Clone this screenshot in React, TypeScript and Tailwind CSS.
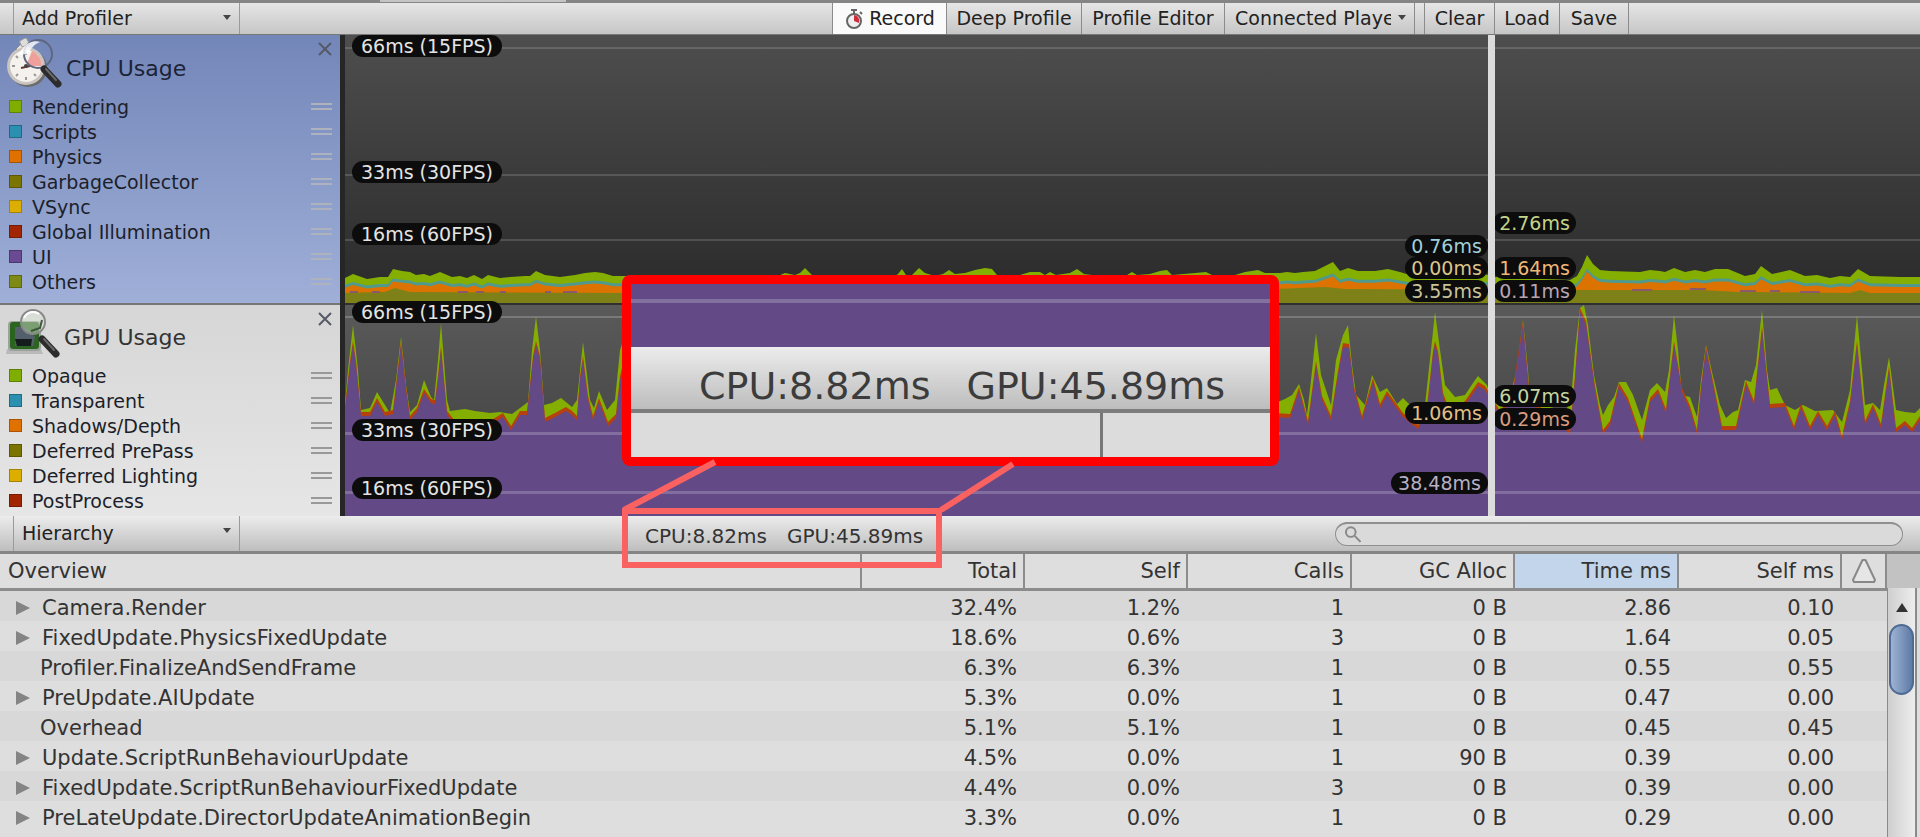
import React from "react";

type Series = { label: string; color: string };

const cpuSeries: Series[] = [
  { label: "Rendering", color: "bg-[#7fae00]" },
  { label: "Scripts", color: "bg-[#2b8fb0]" },
  { label: "Physics", color: "bg-[#e07000]" },
  { label: "GarbageCollector", color: "bg-[#7b7400]" },
  { label: "VSync", color: "bg-[#dcae00]" },
  { label: "Global Illumination", color: "bg-[#a02500]" },
  { label: "UI", color: "bg-[#6a4a92]" },
  { label: "Others", color: "bg-[#7f8a14]" },
];

const gpuSeries: Series[] = [
  { label: "Opaque", color: "bg-[#7fae00]" },
  { label: "Transparent", color: "bg-[#2b8fb0]" },
  { label: "Shadows/Depth", color: "bg-[#e07000]" },
  { label: "Deferred PrePass", color: "bg-[#7b7400]" },
  { label: "Deferred Lighting", color: "bg-[#dcae00]" },
  { label: "PostProcess", color: "bg-[#a02500]" },
];

type Row = { name: string; leaf?: boolean; cells: string[] };

const rows: Row[] = [
  { name: "Camera.Render", cells: ["32.4%", "1.2%", "1", "0 B", "2.86", "0.10"] },
  { name: "FixedUpdate.PhysicsFixedUpdate", cells: ["18.6%", "0.6%", "3", "0 B", "1.64", "0.05"] },
  { name: "Profiler.FinalizeAndSendFrame", leaf: true, cells: ["6.3%", "6.3%", "1", "0 B", "0.55", "0.55"] },
  { name: "PreUpdate.AIUpdate", cells: ["5.3%", "0.0%", "1", "0 B", "0.47", "0.00"] },
  { name: "Overhead", leaf: true, cells: ["5.1%", "5.1%", "1", "0 B", "0.45", "0.45"] },
  { name: "Update.ScriptRunBehaviourUpdate", cells: ["4.5%", "0.0%", "1", "90 B", "0.39", "0.00"] },
  { name: "FixedUpdate.ScriptRunBehaviourFixedUpdate", cells: ["4.4%", "0.0%", "3", "0 B", "0.39", "0.00"] },
  { name: "PreLateUpdate.DirectorUpdateAnimationBegin", cells: ["3.3%", "0.0%", "1", "0 B", "0.29", "0.00"] },
];

type Pt = [number, number];

const parse = (s: string): Pt[] =>
  s.trim().split(/\s+/).map((p) => p.split(",").map(Number) as Pt);

const cpuTop = parse(`345,278 353,274 367,279 380,277 388,277 393,269 402,271 410,272 416,275 424,274 430,276 440,272 452,277 460,276 467,278 474,275 482,279 488,275 500,278 510,277 525,276 530,276 536,271 545,275 560,277 575,275 585,273 595,272 603,273 613,276 620,276
640,276 700,277 778,276 785,273 795,275 800,273 805,268 812,275 895,276 898,274 902,269 906,275 912,275 919,268 925,273 935,276 943,274 949,270 955,274 965,273 975,270 985,268 992,269 997,275 1020,275 1030,272 1040,272 1045,275 1050,272 1056,275 1070,273 1077,269 1084,274 1100,276 1127,275 1132,272 1137,275 1150,274 1160,271 1167,270 1172,275 1195,273 1206,272 1212,275 1235,275 1245,272 1258,270 1265,273
1280,273 1287,272 1295,273 1303,272 1315,271 1323,267 1333,262 1340,271 1348,268 1358,271 1375,271 1388,269 1400,272 1410,275 1430,277 1485,274 1495,277 1570,280 1577,276 1582,267 1587,255 1593,264 1600,270
1610,271 1640,272 1650,270 1660,271 1665,272 1674,268 1685,272 1695,270 1705,272 1715,269 1728,269 1745,276 1755,274 1761,266 1772,274 1790,270 1805,276 1817,275 1830,278 1840,276 1850,277 1858,269 1870,276 1900,277 1920,277`);

const cpuPhysics: Pt[] = cpuTop.map(([x, y]) => [x, 287 + (y - 277) * 0.7]);
const cpuScripts: Pt[] = cpuPhysics.map(([x, y]) => [x, y - 3]);
const cpuOthers = parse("345,293 385,292 395,288 410,292 620,293 1260,290 1275,289 1325,287 1345,289 1600,290 1700,290 1740,292 1850,293 1860,290 1870,293 1920,293");

const gpuTop = parse(`345,403 348,370 353,325 358,370 361,410 370,408 377,392 385,405 390,413 396,380 401,337 406,385 410,412 417,405 424,380 431,397 434,400 438,360 441,323 447,400 450,411 465,409 475,411 490,413 500,412 512,414 520,408 528,402 532,350 536,316 540,350 544,405 552,403 561,398 572,407 577,400 583,342 590,400 594,408 599,391 607,410 615,400 620,350 630,320
700,400 1200,400 1275,403 1285,399 1292,395 1299,384 1304,400 1307,415 1311,380 1316,333 1321,375 1331,405 1336,360 1343,335 1348,325 1352,365 1356,395 1365,405 1372,375 1380,392 1387,388 1397,404 1403,398 1410,405 1425,405 1431,350 1435,312 1440,350 1445,385 1455,397 1465,395 1475,380 1478,376 1487,385 1493,405 1510,395 1517,370 1523,320 1528,370 1530,400 1545,405 1565,412 1571,400 1575,350 1580,308 1584,305
1588,325 1594,375 1600,405 1603,415 1608,405 1614,397 1619,382 1626,382 1633,395 1642,420 1650,390 1657,383 1665,392 1669,370 1674,315 1678,350 1682,395 1690,397 1697,417 1701,380 1706,345 1712,372 1720,405 1726,418 1733,412 1738,410 1745,380 1751,382 1756,365 1762,310 1767,370 1770,390 1777,388 1785,405 1795,410 1803,405 1815,411 1833,410 1842,422 1850,390 1857,315 1862,370 1865,405 1873,403 1880,410 1884,385 1889,357 1896,410 1905,412 1915,413 1920,408`);

const gpuUi = parse(`345,410 350,365 353,345 356,365 361,416 370,416 377,402 385,416 393,414 397,380 401,345 406,390 410,420 417,412 424,393 431,403 435,404 438,380 441,350 447,415 455,425 490,425 503,417 511,430 520,415 527,415 533,360 536,345 540,360 545,422 555,417 566,411 572,415 577,420 580,380 583,360 588,400 593,420 599,402 608,426 616,418 620,380 630,340
700,410 1200,410 1275,417 1290,418 1299,391 1308,425 1316,365 1322,400 1331,420 1338,375 1343,347 1349,348 1354,390 1362,420 1373,382 1380,408 1387,395 1403,417 1418,429 1427,410 1433,355 1435,345 1438,355 1443,397 1450,415 1465,405 1478,386 1485,390 1500,415 1512,400 1523,325 1530,402 1545,415 1560,425 1570,434 1575,380 1580,312
1586,325 1595,390 1603,434 1610,425 1619,387 1628,402 1642,443 1650,402 1658,393 1666,413 1674,345 1682,392 1690,410 1697,434 1701,390 1706,350 1714,390 1722,430 1736,430 1746,385 1754,405 1762,330 1767,380 1770,408 1785,407 1794,430 1801,408 1810,430 1818,415 1827,430 1835,415 1842,440 1850,405 1857,345 1865,425 1873,408 1881,428 1889,370 1896,432 1905,425 1912,432 1920,420`);

const gpuShadows: Pt[] = gpuUi.map(([x, y]) => [x, y - 4]);

const area = (pts: Pt[], base: number) =>
  `M${pts[0][0]},${base} ` + pts.map(([x, y]) => `L${x},${y}`).join(" ") + ` L${pts[pts.length - 1][0]},${base}Z`;

const toolButton =
  "h-full border-r border-[#8b8b8b] text-center text-[19px] whitespace-nowrap text-[#222]";

const headCell = "border-r-2 border-b-[3px] border-[#8c8c8c] font-normal";

function Legend({ items, grip }: { items: Series[]; grip: string }) {
  return (
    <ul className="flex flex-col text-[19px] text-[#1c1f2a]">
      {items.map((s) => (
        <li key={s.label} className="flex h-[25px] items-center pr-2 pl-[9px]">
          <span className={`size-[13px] border border-black/25 ${s.color}`} />
          <span className="ml-[10px] flex-1 leading-6">{s.label}</span>
          <span className={`h-[7px] w-[21px] border-y-2 ${grip}`} />
        </li>
      ))}
    </ul>
  );
}

function CloseButton({ name }: { name: string }) {
  return (
    <button aria-label={`Remove ${name}`} className="mt-[7px] size-[14px] self-start">
      <svg viewBox="0 0 14 14" className="size-full" stroke="#555a66" strokeWidth="2" fill="none">
        <path d="M1 1 13 13M13 1 1 13" />
      </svg>
    </button>
  );
}

function Magnifier() {
  return (
    <>
      <path d="M38 34 52 49" stroke="#2c2c2c" strokeWidth="7" strokeLinecap="round" />
      <path d="M40 34 50 45" stroke="#686868" strokeWidth="2" strokeLinecap="round" />
    </>
  );
}

function CpuIcon() {
  return (
    <svg viewBox="0 0 56 54" className="h-[54px] w-14 shrink-0" fill="none" aria-hidden="true">
      <path d="m10 14 8-8 6 3-8 9Z" fill="#e6e6e6" stroke="#8d8d8d" />
      <rect x="14" y="4" width="8" height="7" rx="2" transform="rotate(-28 18 7)" fill="#ddd" stroke="#999" />
      <circle cx="22" cy="33" r="19" fill="#6d6d6d" />
      <circle cx="20" cy="31" r="19" fill="#c9c4bf" />
      <circle cx="20" cy="31" r="16" fill="#f5f2ee" />
      <path d="M20 31 26 16A16 16 0 0 1 36 31Z" fill="#f0a09a" />
      <path d="M20 17v3M6 31h3M20 42v3M10 21l2 2M10 41l2-2M30 41l-2-2" stroke="#999" strokeWidth="2" />
      <path d="m15 33 9-2" stroke="#6a3030" strokeWidth="2" />
      <circle cx="20" cy="31" r="2" fill="#444" />
      <circle cx="32" cy="19" r="14" stroke="#5d6780" strokeWidth="2" />
      <path d="M12 20C18 9 26 4 34 7c-6 2-9 7-12 12Z" fill="#fff" opacity=".8" />
      <Magnifier />
    </svg>
  );
}

function GpuIcon() {
  return (
    <svg viewBox="0 0 56 54" className="h-[54px] w-14 shrink-0" fill="none" aria-hidden="true">
      <path d="M3 44h34l2 5H2Z" fill="#b9b9b9" />
      <rect x="4" y="16" width="33" height="30" rx="4" fill="#9aa39a" />
      <rect x="6" y="17" width="29" height="27" rx="3" fill="#2b6420" />
      <path d="M11 22h8l6 4 6 6-2 9H11Z" fill="#53606b" />
      <path d="M11 34h17l-1 7H13Z" fill="#141c1c" />
      <circle cx="29" cy="17" r="12" fill="#dbe6d8" fillOpacity=".45" stroke="#888" strokeWidth="2" />
      <path d="M20 13c3-6 10-8 15-4" stroke="#fff" strokeWidth="2" />
      <path d="m27 26 9-3 2-8" stroke="#40573b" strokeWidth="2" />
      <Magnifier />
    </svg>
  );
}

function Pill({ text, className }: { text: string; className: string }) {
  return (
    <span className={`absolute flex h-[22px] items-center justify-center rounded-full bg-[#0c0c0c] text-[19px] leading-[22px] whitespace-nowrap ${className}`}>
      {text}
    </span>
  );
}

function CpuChart() {
  return (
    <div className="relative h-[268px] bg-linear-to-b from-[#4e4e4e] to-[#2a2a2a]">
      <div className="absolute inset-x-0 top-[12px] h-[2px] bg-white/15" />
      <div className="absolute inset-x-0 top-[139px] h-[2px] bg-white/15" />
      <div className="absolute inset-x-0 top-[204px] h-[2px] bg-white/15" />
      <svg viewBox="345 35 1575 268" preserveAspectRatio="none" className="absolute inset-0 size-full" aria-hidden="true">
        <path d={area(cpuTop, 303)} fill="#84ae00" />
        <path d={area(cpuScripts, 303)} fill="#4f9a8c" />
        <path d={area(cpuPhysics, 303)} fill="#dc7300" />
        <path d={area(cpuOthers, 303)} fill="#7d8118" />
        <path d="M350 292h8M372 292h8M458 292h10M476 292h8M500 292h6M545 292h6M563 292h14M1632 290h20M1690 289h16M1740 291h16M1770 291h10M1800 292h20" stroke="#8a5a6a" strokeWidth="2" />
      </svg>
      <Pill text="66ms (15FPS)" className="top-0 left-[7px] w-[150px] text-[#e4e4e4]" />
      <Pill text="33ms (30FPS)" className="top-[126px] left-[7px] w-[150px] text-[#e4e4e4]" />
      <Pill text="16ms (60FPS)" className="top-[188px] left-[7px] w-[150px] text-[#e4e4e4]" />
      <Pill text="0.76ms" className="top-[200px] right-[432px] w-[83px] text-[#9fd0dc]" />
      <Pill text="0.00ms" className="top-[222px] right-[432px] w-[83px] text-[#dcc48c]" />
      <Pill text="3.55ms" className="top-[245px] right-[432px] w-[83px] text-[#c8c49c]" />
      <Pill text="2.76ms" className="top-[177px] right-[344px] w-[83px] text-[#c4d488]" />
      <Pill text="1.64ms" className="top-[222px] right-[344px] w-[83px] text-[#f0b878]" />
      <Pill text="0.11ms" className="top-[245px] right-[344px] w-[83px] text-[#b8a4b4]" />
    </div>
  );
}

function GpuChart() {
  return (
    <div className="relative h-[213px] border-t-2 border-[#303030] bg-linear-to-b from-[#5a5a5a] to-[#484848] to-60%">
      <svg viewBox="345 305 1575 211" preserveAspectRatio="none" className="absolute inset-0 size-full" aria-hidden="true">
        <path d={area(gpuTop, 516)} fill="#84ae00" />
        <path d={area(gpuShadows, 516)} fill="#b8400c" />
        <path d={area(gpuUi, 516)} fill="#634a86" />
      </svg>
      <div className="absolute inset-x-0 top-[11px] h-[2px] bg-white/20" />
      <div className="absolute inset-x-0 top-[127px] h-[3px] bg-white/20" />
      <div className="absolute inset-x-0 top-[186px] h-[3px] bg-white/20" />
      <Pill text="66ms (15FPS)" className="-top-[4px] left-[7px] w-[150px] text-[#e4e4e4]" />
      <Pill text="33ms (30FPS)" className="top-[114px] left-[7px] w-[150px] text-[#e4e4e4]" />
      <Pill text="16ms (60FPS)" className="top-[172px] left-[7px] w-[150px] text-[#e4e4e4]" />
      <Pill text="1.06ms" className="top-[97px] right-[432px] w-[83px] text-[#e0c088]" />
      <Pill text="38.48ms" className="top-[167px] right-[432px] w-[97px] text-[#b8b0c4]" />
      <Pill text="6.07ms" className="top-[80px] right-[344px] w-[83px] text-[#c4d4a0]" />
      <Pill text="0.29ms" className="top-[103px] right-[344px] w-[83px] text-[#d89c80]" />
    </div>
  );
}

function Callout() {
  return (
    <div className="pointer-events-none absolute top-[275px] left-[622px] h-[293px] w-[657px]">
      <div className="flex h-[191px] flex-col overflow-hidden rounded-lg border-[9px] border-[#ff0000] bg-[#dcdcdc]">
        <div className="h-[63px] bg-[#634a86] pt-[15px]">
          <div className="h-1 bg-[#82709e]" />
        </div>
        <div className="flex h-[66px] items-center gap-9 border-b-4 border-[#7d7d7d] bg-linear-to-b from-[#ececec] to-[#bdbdbd] pt-4 pl-[68px] text-[38px] leading-[46px] whitespace-nowrap text-[#3c3c3c]">
          <span>CPU:8.82ms</span>
          <span>GPU:45.89ms</span>
        </div>
        <div className="flex-1 pl-[469px]">
          <div className="h-full border-l-[3px] border-[#777]" />
        </div>
      </div>
      <div className="absolute bottom-0 left-0 h-[60px] w-[320px] border-[6px] border-[#fa6262]" />
      <svg viewBox="0 0 657 293" className="absolute inset-0 size-full" stroke="#fa6262" strokeWidth="6" fill="none" aria-hidden="true">
        <path d="M93 187 2 235M391 189 319 235" />
      </svg>
    </div>
  );
}

function DropDown({ label, name }: { label: string; name: string }) {
  return (
    <div className="relative ml-[13px] h-full w-[227px] border-x border-[#9a9a9a]">
      <select aria-label={name} className="h-full w-full appearance-none bg-transparent pl-2 text-[19px] text-[#222]">
        <option>{label}</option>
      </select>
      <span className="pointer-events-none absolute top-3 right-[8px] border-x-4 border-t-[5px] border-x-transparent border-t-[#444]" />
    </div>
  );
}

export default function App() {
  return (
    <main className="relative flex min-h-screen flex-col overflow-hidden bg-[#dedede] font-['DejaVu_Sans',sans-serif] text-[#333]">
      <div className="flex h-[35px] flex-col">
        <div className="h-[3px] bg-[#858585] pl-[380px]">
          <div className="h-[2px] w-[186px] bg-[#c4c4c4]" />
        </div>
        <div className="flex h-8 border-b border-[#777] bg-linear-to-b from-[#e6e6e6] to-[#c6c6c6]">
          <DropDown label="Add Profiler" name="Add Profiler" />
          <div className="flex-1" />
          <div className="flex">
            <button className="flex h-full w-[115px] items-center justify-center gap-[5px] border-x border-[#8b8b8b] bg-[#fafafa] text-[19px] text-[#222]">
              <svg viewBox="0 0 20 22" className="h-[22px] w-5" fill="none" aria-hidden="true">
                <circle cx="10" cy="13" r="7" fill="#eee" stroke="#666" strokeWidth="2" />
                <path d="M10 13V7a6 6 0 0 1 5 8Z" fill="#d02c3c" />
                <path d="M7 2h6M10 2v4M16 4l2 2" stroke="#666" strokeWidth="2" />
              </svg>
              Record
            </button>
            <button className={`${toolButton} w-[135px]`}>Deep Profile</button>
            <button className={`${toolButton} w-[143px]`}>Profile Editor</button>
            <div className="relative h-full w-[190px] border-r border-[#8b8b8b]">
              <select aria-label="Connected Player" className="h-full w-[166px] appearance-none overflow-hidden bg-transparent pl-[10px] text-[19px] text-[#222]">
                <option>Connected Player</option>
              </select>
              <span className="pointer-events-none absolute top-3 right-2 border-x-4 border-t-[5px] border-x-transparent border-t-[#444]" />
            </div>
            <button className={`${toolButton} ml-[9px] w-[71px] border-l`}>Clear</button>
            <button className={`${toolButton} w-[65px]`}>Load</button>
            <button className={`${toolButton} w-[69px]`}>Save</button>
          </div>
          <div className="w-[291px]" />
        </div>
      </div>

      <div className="flex h-[481px]">
        <div className="w-[340px] shrink-0 overflow-hidden">
          <section className="h-[268px] bg-linear-to-b from-[#7386b8] to-[#9fafd8]">
            <div className="flex h-[59px] pr-2 pl-[6px]">
              <CpuIcon />
              <h2 className="ml-1 flex-1 pt-[18px] text-[22px] leading-8 text-[#1c2336]">CPU Usage</h2>
              <CloseButton name="CPU Usage" />
            </div>
            <Legend items={cpuSeries} grip="border-[#adb2bd]" />
          </section>
          <section className="h-[213px] border-t-2 border-[#767676] bg-linear-to-b from-[#d6d6d6] to-[#e6e6e6]">
            <div className="flex h-[58px] pr-2 pl-[4px]">
              <GpuIcon />
              <h2 className="ml-1 flex-1 pt-[17px] text-[22px] leading-8 text-[#333]">GPU Usage</h2>
              <CloseButton name="GPU Usage" />
            </div>
            <Legend items={gpuSeries} grip="border-[#999]" />
          </section>
        </div>
        <div className="relative flex-1 border-l-[5px] border-[#262626]">
          <CpuChart />
          <GpuChart />
          <div className="absolute inset-y-0 right-[425px] w-[7px] bg-[#dcdcdc]" />
        </div>
      </div>

      <div className="flex h-[38px] items-center border-b-[3px] border-[#858585] bg-linear-to-b from-[#ececec] to-[#bebebe]">
        <DropDown label="Hierarchy" name="View mode" />
        <div className="flex flex-1 gap-4 pt-1 pl-[405px] text-[20px] leading-6 whitespace-nowrap text-[#333]">
          <span className="w-[126px]">CPU:8.82ms</span>
          <span>GPU:45.89ms</span>
        </div>
        <label className="mr-[17px] flex h-6 w-[568px] items-center rounded-full border border-t-2 border-[#8f8f8f] bg-[#dadada] pl-2">
          <svg viewBox="0 0 18 18" className="size-[18px]" fill="none" stroke="#888" strokeWidth="2" aria-hidden="true">
            <circle cx="7" cy="7" r="5" />
            <path d="m11 11 6 6" />
          </svg>
          <input type="search" aria-label="Search" className="w-full bg-transparent px-2 text-[16px] outline-none" />
        </label>
      </div>

      <div className="flex flex-1">
        <div className="flex-1">
          <table className="w-full table-fixed border-separate border-spacing-0 text-[21px] leading-[26px] text-[#333]">
            <thead>
              <tr className="h-[37px] bg-[#dedede]">
                <th className={`${headCell} pl-2 text-left`}>Overview</th>
                <th className={`${headCell} w-[163px] pr-[6px] text-right`}>Total</th>
                <th className={`${headCell} w-[163px] pr-[6px] text-right`}>Self</th>
                <th className={`${headCell} w-[164px] pr-[6px] text-right`}>Calls</th>
                <th className={`${headCell} w-[163px] pr-[6px] text-right`}>GC Alloc</th>
                <th className={`${headCell} w-[164px] bg-[#c3d5ea] pr-[6px] text-right`}>Time ms</th>
                <th className={`${headCell} w-[163px] pr-[6px] text-right`}>Self ms</th>
                <th aria-label="Warnings" className={`${headCell} w-[45px]`}>
                  <svg viewBox="0 0 26 26" className="mx-auto size-[26px]" fill="#e6e6e6" stroke="#888" strokeWidth="2" strokeLinejoin="round" aria-hidden="true">
                    <path d="M11.500 2h3L24 22l-1 2H3l-1-2Z" />
                  </svg>
                </th>
              </tr>
            </thead>
            <tbody>
              {rows.map((r) => (
                <tr key={r.name} className="h-[30px] odd:bg-[#d8d8d8] even:bg-[#dedede]">
                  <td className="pt-1 whitespace-nowrap">
                    <div className={`flex items-center ${r.leaf ? "pl-10" : "pl-4"}`}>
                      {!r.leaf && (
                        <button aria-label={`Expand ${r.name}`} className="mr-3 border-y-[7px] border-l-[14px] border-y-transparent border-l-[#848484]" />
                      )}
                      <span>{r.name}</span>
                    </div>
                  </td>
                  {r.cells.map((c, i) => (
                    <td key={i} className="pt-1 pr-2 text-right">{c}</td>
                  ))}
                  <td />
                </tr>
              ))}
            </tbody>
          </table>
        </div>
        <div className="flex w-[33px] flex-col">
          <div className="h-[34px] w-full bg-[#c2c2c2]" />
          <div className="flex w-[30px] flex-1 flex-col items-center border-r-2 border-l border-[#8a8a8a] bg-linear-to-r from-[#cfcfcf] to-[#ededed]">
            <button aria-label="Scroll up" className="mt-[15px] border-x-[6px] border-b-[9px] border-x-transparent border-b-[#333]" />
            <div className="mt-[12px] h-[71px] w-[25px] rounded-full border-2 border-[#4f6b94] bg-linear-to-r from-[#9db3d3] to-[#5f7ba6]" />
          </div>
        </div>
      </div>
      <Callout />
    </main>
  );
}
